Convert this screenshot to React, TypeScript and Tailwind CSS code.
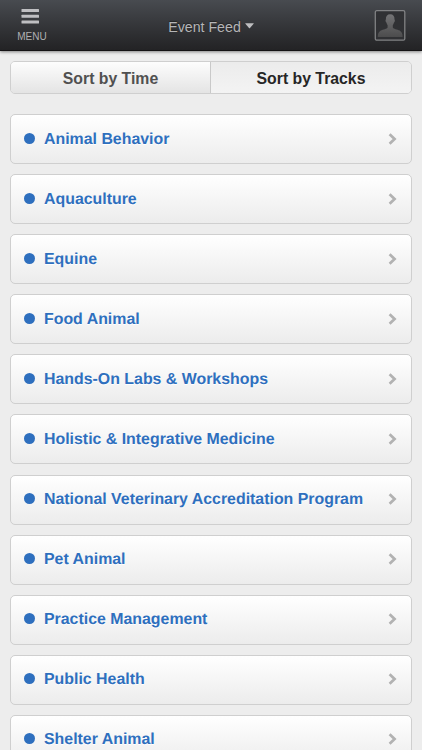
const tracks = [
  'Animal Behavior',
  'Aquaculture',
  'Equine',
  'Food Animal',
  'Hands-On Labs & Workshops',
  'Holistic & Integrative Medicine',
  'National Veterinary Accreditation Program',
  'Pet Animal',
  'Practice Management',
  'Public Health',
  'Shelter Animal',
];

function Header() {
  return (
    <header className="relative flex h-[51px] shrink-0 justify-between border-b border-[#151315] bg-linear-to-b from-[#484b50] to-[#232325] text-[#b5b5b7] shadow-[0_1px_3px_rgba(0,0,0,0.45)]">
      <button className="flex w-16 flex-col items-center pt-[9px]">
        <svg width="18" height="15" viewBox="0 0 18 15" fill="#bfbfc2" className="mr-1">
          <rect x=".5" y="0" width="17.500" height="2.900" rx=".5" />
          <rect x=".5" y="5.800" width="17.500" height="2.900" rx=".5" />
          <rect x=".5" y="11.600" width="17.500" height="2.900" rx=".5" />
        </svg>
        <span className="mt-[7px] text-[10px] leading-3 text-[#b0b0b2]">MENU</span>
      </button>
      <button className="flex items-center gap-1 pt-[3px] text-[14.2px] leading-5 [text-shadow:0_-1px_1px_#222]">
        <span>Event Feed</span>
        <svg width="9" height="6" viewBox="0 0 9 6" className="mb-0.5">
          <path d="M.7.2h7.6q.8 0 .3.6L5 5.1q-.5.5-1 0L.4.8Q-.1.2.7.2Z" fill="#bebec0" />
        </svg>
      </button>
      <button className="flex w-16 pt-2.5">
        <svg width="32" height="32" viewBox="0 0 32 32" className="ml-4">
          <defs>
            <linearGradient id="person" x1="0" y1="0" x2="0" y2="1">
              <stop offset="0" stopColor="#747476" />
              <stop offset="1" stopColor="#4c4c4d" />
            </linearGradient>
          </defs>
          <rect x="1.3" y="0.7" width="29.5" height="29.5" rx="1.500" fill="#303134" stroke="#818284" strokeWidth="1.3" />
          <path d="M16.200 4.200c-3 0-4.500 2-4.300 5.200-.7.5-.3 2.500.5 3 .3 1.300.8 2 1.200 2.700v2.300c-.5 1.500-4.500 1.900-6.800 3.200C4.600 21.900 3.800 24 3.800 27h24.800c0-3-.8-5.100-3-6.400-2.300-1.300-6.300-1.700-6.800-3.200v-2.300c.4-.7.9-1.400 1.200-2.700.8-.5 1.200-2.500.5-3 .2-3.200-1.300-5.200-4.300-5.200Z" fill="url(#person)" />
        </svg>
      </button>
    </header>
  );
}

function SortTabs() {
  return (
    <div className="flex h-[33px] shrink-0 overflow-hidden rounded-[5px] border border-[#cfcfcf] text-[15.8px] font-bold [text-shadow:0_1px_0_#fff]">
      <button className="w-[200px] border-r border-[#c9c9c9] bg-linear-to-b from-[#fdfdfd] to-[#e4e4e4] pt-0.5 text-[#505050]">Sort by Time</button>
      <button className="flex-1 bg-linear-to-b from-[#ececec] to-[#f3f3f3] pt-0.5 text-[#262626]">Sort by Tracks</button>
    </div>
  );
}

function TrackRow({ name }: { name: string }) {
  return (
    <li className="flex h-[50px] shrink-0 items-center rounded-[5px] border border-[#cfcfcf] bg-linear-to-b from-white to-[#ececec] pr-3.5 pl-[13px]">
      <span className="mb-0.5 size-[11px] rounded-full bg-[#2e6fbe]" />
      <span className="mt-px ml-[9px] flex-1 text-[15.9px] leading-5 font-bold whitespace-nowrap text-[#2e6fbe] [text-shadow:0_1px_0_#fff]">{name}</span>
      <svg width="9" height="12" viewBox="0 0 9 12" fill="none" stroke="#b2b2b2" strokeWidth="2.700" className="mb-px">
        <path d="M1.600 1.200 6.600 6l-5 4.800" />
      </svg>
    </li>
  );
}

export default function App() {
  return (
    <div className="flex h-[750px] w-[422px] flex-col overflow-hidden bg-[#ededed] font-['Liberation_Sans',Arial,sans-serif] [text-rendering:geometricPrecision]">
      <Header />
      <main className="flex min-h-0 flex-1 flex-col overflow-hidden px-2.5 pt-2.5">
        <SortTabs />
        <ul className="mt-5 flex flex-col gap-[10.1px]">
          {tracks.map((name) => (
            <TrackRow key={name} name={name} />
          ))}
        </ul>
      </main>
    </div>
  );
}
